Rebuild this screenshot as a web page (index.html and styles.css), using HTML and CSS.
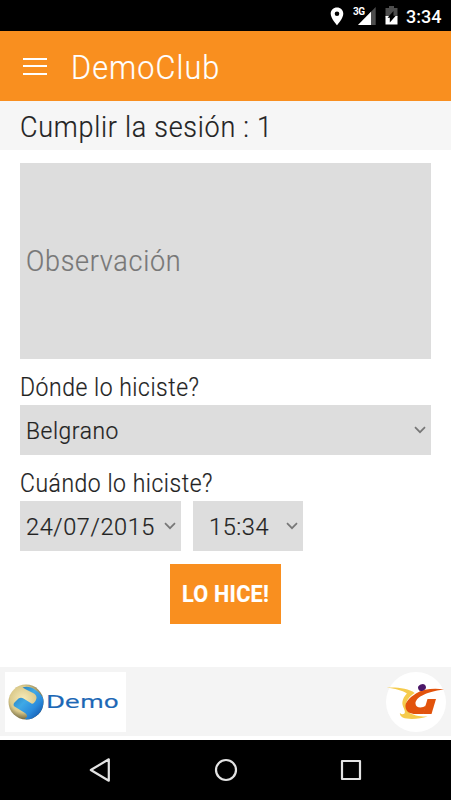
FILE: index.html
```html
<!DOCTYPE html>
<html lang="es">
<head>
  <meta charset="UTF-8">
  <meta name="viewport" content="width=device-width, initial-scale=1.0">
  <title>DemoClub</title>
  <link rel="stylesheet" href="styles.css">
</head>
<body>

<div class="status-bar">
  <svg class="icon-pin" width="14" height="19" viewBox="0 0 14 19">
    <path fill="#fff" fill-rule="evenodd" d="M7 .5C3.400.5.7 3.200.7 6.800c0 4.600 6.300 11.500 6.300 11.500s6.300-6.900 6.300-11.500C13.300 3.200 10.600.5 7 .5zM7 4.500a2.300 2.300 0 1 1 0 4.600 2.300 2.300 0 0 1 0-4.600z"/>
  </svg>
  <div class="signal">
    <span class="network">3G</span>
    <svg width="18" height="18" viewBox="0 0 18 18">
      <path fill="#4d4d4d" d="M17.700 0v18H0z"/>
      <path fill="#fff" d="M13 4.800V18H0z"/>
    </svg>
  </div>
  <svg class="icon-battery" width="13" height="19" viewBox="0 0 13 19">
    <path fill="#4d4d4d" d="M4 0h5v2h3.500v9H.5V2H4z"/>
    <path fill="#fff" d="M.5 10h12v8.500H.5z"/>
    <path fill="#000" d="M8.500 5v4.800h2.300L4.800 16.500v-4.800H2.500z"/>
  </svg>
  <span class="clock">3:34</span>
</div>

<header class="app-bar">
  <div class="menu"><i></i><i></i><i></i></div>
  <h1><span class="text name">DemoClub</span></h1>
</header>

<h2 class="session"><span class="text heading">Cumplir la sesión : 1</span></h2>

<main class="form">
  <div class="field note"><span class="text hint">Observación</span></div>

  <div class="label"><span class="text where">Dónde lo hiciste?</span></div>
  <div class="field select">
    <span class="text place">Belgrano</span>
    <svg class="arrow" width="12" height="8" viewBox="0 0 12 8"><path d="M1 1.200l5 5 5-5"/></svg>
  </div>

  <div class="label"><span class="text when">Cuándo lo hiciste?</span></div>
  <div class="row">
    <div class="field select date">
      <span class="text day">24/07/2015</span>
      <svg class="arrow" width="12" height="8" viewBox="0 0 12 8"><path d="M1 1.200l5 5 5-5"/></svg>
    </div>
    <div class="field select time">
      <span class="text hour">15:34</span>
      <svg class="arrow" width="12" height="8" viewBox="0 0 12 8"><path d="M1 1.200l5 5 5-5"/></svg>
    </div>
  </div>

  <button class="submit"><span class="text action">LO HICE!</span></button>
</main>

<footer class="brands">
  <div class="brand-demo">
    <svg width="36" height="36" viewBox="0 0 36 36">
      <defs>
        <radialGradient id="gold" cx=".42" cy=".42" r=".6">
          <stop offset="0" stop-color="#f7ebba"/>
          <stop offset=".6" stop-color="#dccb8c"/>
          <stop offset="1" stop-color="#5d5634"/>
        </radialGradient>
        <linearGradient id="blue" x1="0" y1="0" x2="1" y2="1">
          <stop offset="0" stop-color="#1c6fae"/>
          <stop offset=".4" stop-color="#3fa9e6"/>
          <stop offset=".65" stop-color="#2a8bdc"/>
          <stop offset="1" stop-color="#0a3f96"/>
        </linearGradient>
        <clipPath id="ball"><circle cx="18" cy="18" r="17.500"/></clipPath>
      </defs>
      <g clip-path="url(#ball)">
        <rect width="36" height="36" fill="url(#gold)"/>
        <path fill="url(#blue)" d="M14.500 3.500c4-1.500 9-.5 13 2.500 5 3 9 8 9 14 0 9-8 16-18 16l-1.500-1.500c3-1 2.500-4 0-5.500L6.500 22.500c-1.500-1-1-3 0-4l4-4c1.500-1 3.500-1 5 0l8 5c2 1.200 4.500-2.500 5-5.500.3-2-1-3.500-2.500-4.500L18 5.500z"/>
      </g>
    </svg>
    <span class="text brand">Demo</span>
  </div>
  <div class="brand-club">
    <svg width="60" height="60" viewBox="0 0 60 60">
      <path fill="#f5cb4c" d="M.7 15.700c10-.6 22 .6 28 5.300-5 3-8 7-8.500 11 0 4 3 6 3.500 9 5 3 12 3.500 18 3.500-8 2.500-19 3.500-25 1-2-1-3-3-2.800-4.500 2 2 5 1.500 5-1 0-3-3-6-2.500-10 .4-3 2-6 4.500-8.500-5-3.500-12-5-20.200-5.800z"/>
      <path fill="#e2530c" d="M58 17.500c-10-1.500-21-.5-28 4-7 4.300-11 9-10.500 13.500.6 5 5 7 10 7h8l2.500-8.500c-4 3-10.500 2.500-10.500-2 0-5.500 9-11.500 28.500-14z"/>
      <path fill="#e2530c" d="M41.500 27H50l-4.500 15H37z"/>
      <ellipse cx="36" cy="15.500" rx="4" ry="3.300" transform="rotate(-25 36 15.500)" fill="#4b1768"/>
    </svg>
  </div>
</footer>

<nav class="nav-bar">
  <svg width="22" height="26" viewBox="0 0 22 26"><path d="M19.800 2.300v21.400L1.800 13z"/></svg>
  <svg width="24" height="24" viewBox="0 0 24 24"><circle cx="12" cy="12" r="10"/></svg>
  <svg width="22" height="22" viewBox="0 0 22 22"><path d="M2 2h18v18H2z"/></svg>
</nav>

</body>
</html>
```
FILE: styles.css
```css
* {
  box-sizing: border-box;
}
body {
  margin: 0;
  height: 800px;
  display: flex;
  flex-direction: column;
  background-color: #fff;
  color: #222;
  font-family: Roboto, "Liberation Sans", sans-serif;
  font-weight: 300;
  overflow: hidden;
}
.text {
  display: inline-block;
  white-space: nowrap;
  transform-origin: left center;
  -webkit-text-stroke: 0.2px currentColor;
}
.status-bar {
  height: 31px;
  flex: none;
  display: flex;
  align-items: center;
  padding-left: 330px;
  background-color: #000;
  color: #fff;
}
.icon-pin {
  margin-top: 1px;
}
.signal {
  display: flex;
  align-items: center;
  margin-left: 9px;
}
.network {
  width: 5px;
  height: 18px;
  font-size: 10px;
  font-weight: 700;
  line-height: 10px;
  letter-spacing: -0.5px;
}
.icon-battery {
  margin-left: 9px;
}
.clock {
  margin-left: 8px;
  margin-top: 2px;
  font-size: 18px;
  font-weight: 500;
}
.app-bar {
  height: 70px;
  flex: none;
  display: flex;
  align-items: center;
  padding-left: 23px;
  background-color: #f98f1f;
  color: #fff;
}
.menu {
  width: 24px;
  height: 17px;
  display: flex;
  flex-direction: column;
  justify-content: space-between;
}
.menu i {
  height: 2px;
  background-color: #fff;
}
h1 {
  margin: 2px 0 0 24px;
  font-size: 34px;
  font-weight: 300;
  line-height: 40px;
}
.name {
  letter-spacing: 1.2px;
  transform: scaleX(0.9);
}
.session {
  height: 49px;
  flex: none;
  margin: 0;
  padding-left: 20px;
  background-color: #f6f6f6;
  font-size: 29.5px;
  font-weight: 300;
  line-height: 52px;
}
.heading {
  letter-spacing: 0.8px;
  transform: scaleX(0.915);
}
.form {
  height: 517px;
  flex: none;
  display: flex;
  flex-direction: column;
  padding: 12.5px 20px 0;
}
.field {
  display: flex;
  align-items: center;
  background-color: #ddd;
}
.note {
  height: 196px;
  flex: none;
  padding-left: 6px;
  color: #777;
  font-size: 30px;
}
.hint {
  letter-spacing: 0.8px;
  transform: scaleX(0.9);
}
.label {
  height: 46px;
  padding-top: 12px;
  font-size: 25px;
  line-height: 34px;
}
.where,
.when {
  letter-spacing: 0.6px;
  transform: scaleX(0.917);
}
.select {
  height: 50px;
  justify-content: space-between;
  padding: 2px 5px 0 6px;
  font-size: 24px;
}
.place {
  letter-spacing: 0.6px;
  transform: scaleX(0.95);
}
.day,
.hour {
  letter-spacing: 0.6px;
  transform: scaleX(0.98);
}
.arrow {
  margin-top: -2px;
  fill: none;
  stroke: #777;
  stroke-width: 1.7;
}
.row {
  display: flex;
  gap: 12px;
}
.date {
  width: 161px;
}
.date .arrow {
  margin-left: -8px;
}
.time {
  width: 110px;
  padding-left: 16px;
}
.submit {
  width: 111px;
  height: 60px;
  margin-top: 13px;
  margin-left: 150px;
  padding: 1px 0 0 12px;
  border: none;
  background-color: #f98f1f;
  color: #fff;
  font-family: inherit;
  font-size: 24px;
  font-weight: 700;
  text-align: left;
}
.action {
  letter-spacing: 0.3px;
  transform: scaleX(0.9);
}
.brands {
  height: 69px;
  flex: none;
  display: flex;
  align-items: center;
  justify-content: space-between;
  padding: 0 5px;
  background-color: #f4f4f4;
}
.brand-demo {
  width: 121px;
  height: 60px;
  display: flex;
  align-items: center;
  padding-left: 3px;
  background-color: #fff;
  color: #1b67b5;
  font-family: "DejaVu Sans", sans-serif;
  font-size: 18px;
  font-weight: 400;
}
.brand {
  margin-left: 2px;
  transform: scaleX(1.36);
}
.brand-club {
  width: 60px;
  height: 60px;
  border-radius: 50%;
  background-color: #fff;
}
.brand-club svg {
  display: block;
}
.nav-bar {
  height: 60px;
  flex: none;
  display: flex;
  align-items: center;
  justify-content: space-between;
  margin-top: 4px;
  padding: 0 89px;
  background-color: #000;
}
.nav-bar svg {
  fill: none;
  stroke: #e3e3e3;
  stroke-width: 2.2;
  stroke-linejoin: round;
}
```
